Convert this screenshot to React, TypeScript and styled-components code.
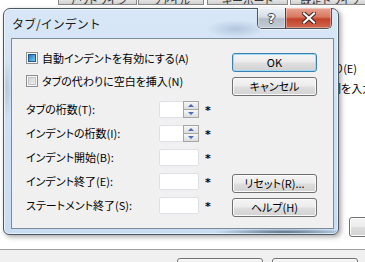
import { Fragment } from "react";
import styled, { createGlobalStyle } from "styled-components";

const GlobalStyle = createGlobalStyle`
  html, body {
    margin: 0;
    padding: 0;
    background: #fff;
  }
  body {
    font-family: "Noto Sans CJK JP", "Noto Sans", sans-serif;
    font-size: 12px;
    color: #000;
  }
`;

const Screen = styled.div`
  position: relative;
  width: 365px;
  height: 262px;
  overflow: hidden;
  display: flex;
  flex-direction: column;
  background: #fff;
  font-feature-settings: "palt" 1;
`;

const TabStrip = styled.div`
  flex: none;
  display: flex;
  height: 5px;
  padding-left: 58px;
  overflow: hidden;
`;

const StripTab = styled.div<{ $w: number; $gap: number }>`
  flex: none;
  box-sizing: border-box;
  width: ${({ $w }) => $w}px;
  height: 5px;
  margin-right: ${({ $gap }) => $gap}px;
  border: 1px solid #8a8a8a;
  border-top: none;
  background: linear-gradient(#e4e4e4, #d0d0d0);
  display: flex;
  align-items: flex-end;
  justify-content: center;
  overflow: hidden;
  line-height: 8px;
  font-size: 11px;
  color: #333;
`;

const Backdrop = styled.div`
  flex: 1;
  display: flex;
  padding-left: 334px;
`;

const SidePane = styled.div`
  display: flex;
  flex-direction: column;
  gap: 6px;
  padding: 56px 0 12px;
  white-space: nowrap;
  font-size: 11px;
`;

const SideLine = styled.div<{ $indent?: number }>`
  line-height: 14px;
  margin-left: ${({ $indent = 0 }) => $indent}px;
`;

const WinButton = styled.button<{ $default?: boolean; $w?: number; $h?: number }>`
  flex: none;
  box-sizing: border-box;
  width: ${({ $w = 85 }) => $w}px;
  height: ${({ $h = 19 }) => $h}px;
  padding: 0;
  font: inherit;
  font-size: 11px;
  line-height: 1;
  color: #000;
  border: 1px solid ${({ $default }) => ($default ? "#3c7fb1" : "#707070")};
  border-radius: 3px;
  background: linear-gradient(#f4f4f4 0%, #ececec 48%, #dedede 52%, #d2d2d2 100%);
  box-shadow: inset 0 0 0 1px ${({ $default }) => ($default ? "#9fdcf6" : "#fbfbfb")};
  white-space: nowrap;
  overflow: hidden;
`;

const SideButton = styled(WinButton)`
  margin-top: auto;
  margin-left: 15px;
  text-align: left;
  padding-left: 14px;
`;

const BottomBar = styled.div`
  flex: none;
  box-sizing: border-box;
  height: 13px;
  border-top: 1px solid #a0a0a0;
  background: #f0f0f0;
  display: flex;
  align-items: flex-start;
  justify-content: flex-end;
  gap: 9px;
  padding: 8px 7px 0 0;
`;

const Dialog = styled.div`
  position: absolute;
  left: 3px;
  top: 8px;
  width: 336px;
  height: 227px;
  box-sizing: border-box;
  display: flex;
  flex-direction: column;
  padding: 0 4px 7px 7px;
  border: 1px solid #4b5866;
  border-radius: 7px 7px 6px 6px;
  background:
    radial-gradient(ellipse 30px 9px at 232px 20px, rgba(110, 140, 175, 0.35), transparent),
    radial-gradient(ellipse 70px 3px at 280px 223px, rgba(55, 75, 95, 0.75), transparent),
    radial-gradient(ellipse 5px 30px at 3px 80px, rgba(120, 140, 165, 0.3), transparent),
    linear-gradient(180deg, #d8e7f7 0%, #cfe1f4 45%, #c9ddf2 100%);
  box-shadow:
    inset 0 0 0 1px rgba(255, 255, 255, 0.55),
    2px 2px 5px rgba(0, 0, 0, 0.35);
`;

const TitleBar = styled.div`
  flex: none;
  height: 29px;
  display: flex;
  align-items: center;
  padding-left: 1px;
  font-size: 12px;
  font-feature-settings: normal;
  color: #1b1b1b;
`;

const CaptionGroup = styled.div`
  position: absolute;
  top: -1px;
  right: 6px;
  display: flex;
  border: 1px solid #4a5462;
  border-top: none;
  border-radius: 0 0 5px 5px;
  overflow: hidden;
  box-shadow: 0 1px 0 rgba(255, 255, 255, 0.6);
`;

const CaptionButton = styled.div<{ $close?: boolean }>`
  box-sizing: border-box;
  width: ${({ $close }) => ($close ? 46 : 27)}px;
  height: 20px;
  display: flex;
  align-items: center;
  justify-content: center;
  border-left: ${({ $close }) => ($close ? "1px solid #5a3a36" : "none")};
  background: ${({ $close }) =>
    $close
      ? "linear-gradient(#e8a595 0%, #d9775f 45%, #c2412a 55%, #cf6a4e 100%)"
      : "linear-gradient(#eef2f6 0%, #d5dce4 45%, #b3bdc8 55%, #c4ccd6 100%)"};
  box-shadow: inset 0 0 0 1px rgba(255, 255, 255, 0.35);
`;

const HelpGlyph = styled.span`
  font-family: "DejaVu Sans", sans-serif;
  font-weight: bold;
  font-size: 13px;
  line-height: 1;
  color: #fff;
  text-shadow:
    -1px 0 #3b4450, 1px 0 #3b4450, 0 -1px #3b4450, 0 1px #3b4450;
`;

const Client = styled.div`
  flex: 1;
  display: flex;
  box-sizing: border-box;
  border: 1px solid #7d8a98;
  background: #f0f0f0;
  padding: 0 16px 11px 14px;
  font-size: 11px;
`;

const Options = styled.div`
  flex: 1;
  display: flex;
  flex-direction: column;
  padding-top: 7px;
  white-space: nowrap;
`;

const CheckRow = styled.label`
  display: flex;
  align-items: center;
  gap: 4px;
  height: 23px;
`;

const Box = styled.span<{ $mixed?: boolean }>`
  flex: none;
  box-sizing: border-box;
  width: 12px;
  height: 12px;
  padding: 1px;
  display: flex;
  border: 1px solid #8e8f8f;
  background: #f6f6f6;

  &::after {
    content: "";
    flex: 1;
    box-sizing: border-box;
    border: 1px solid ${({ $mixed }) => ($mixed ? "#1f5a8e" : "#c4c4c4")};
    background: ${({ $mixed }) =>
      $mixed
        ? "linear-gradient(135deg, #2a70b5 0%, #56a8dd 60%, #7cc4ec 100%)"
        : "linear-gradient(135deg, #d6d6d6 0%, #ececec 100%)"};
  }
`;

const FieldGrid = styled.div`
  display: grid;
  grid-template-columns: 127px 40px auto;
  grid-auto-rows: 24px;
  column-gap: 6px;
  align-items: center;
  margin-top: 5px;
`;

const Field = styled.div`
  box-sizing: border-box;
  width: 40px;
  height: 17px;
  display: flex;
  justify-content: flex-end;
  background: #fff;
  border: 1px solid #dde0e6;
  border-radius: 2px;
`;

const Spinner = styled.div`
  box-sizing: border-box;
  width: 16px;
  display: flex;
  flex-direction: column;
  gap: 1px;
  margin: -1px -1px -1px 0;
  border: 1px solid #a6a6a6;
  background: #a6a6a6;
`;

const SpinHalf = styled.div<{ $down?: boolean }>`
  flex: 1;
  display: flex;
  align-items: center;
  justify-content: center;
  background: linear-gradient(#f7f7f7, #dedede);

  &::after {
    content: "";
    width: 0;
    height: 0;
    border-left: 3px solid transparent;
    border-right: 3px solid transparent;
    ${({ $down }) =>
      $down ? "border-top: 3px solid #4a6cb0;" : "border-bottom: 3px solid #4a6cb0;"}
  }
`;

const Mark = styled.span`
  font-family: "DejaVu Sans", sans-serif;
  font-size: 11px;
  font-weight: bold;
  line-height: 1;
  padding-top: 3px;
`;

const Actions = styled.div`
  flex: none;
  display: flex;
  flex-direction: column;
  gap: 5px;
  padding-top: 14px;
`;

const Spacer = styled.div`
  flex: 1;
`;

const fields = [
  { label: "タブの桁数(T):", spin: true },
  { label: "インデントの桁数(I):", spin: true },
  { label: "インデント開始(B):", spin: false },
  { label: "インデント終了(E):", spin: false },
  { label: "ステートメント終了(S):", spin: false },
];

const tabs = [
  { w: 79, gap: 1, text: "アウトライン" },
  { w: 66, gap: 3, text: "ファイル" },
  { w: 81, gap: 2, text: "キーボード" },
  { w: 80, gap: 0, text: "既定ドライブ" },
];

export default function App() {
  return (
    <>
      <GlobalStyle />
      <Screen>
        <TabStrip>
          {tabs.map((t) => (
            <StripTab key={t.text} $w={t.w} $gap={t.gap}>
              {t.text}
            </StripTab>
          ))}
        </TabStrip>

        <Backdrop>
          <SidePane>
            <SideLine>り(E)</SideLine>
            <SideLine $indent={-4}>列を入力</SideLine>
            <SideButton $w={70} $h={20}>
              リセット
            </SideButton>
          </SidePane>
        </Backdrop>

        <BottomBar>
          <WinButton $w={86} $h={22}>
            OK
          </WinButton>
          <WinButton $w={86} $h={22}>
            キャンセル
          </WinButton>
        </BottomBar>

        <Dialog>
          <TitleBar>タブ/インデント</TitleBar>
          <CaptionGroup>
            <CaptionButton>
              <HelpGlyph>?</HelpGlyph>
            </CaptionButton>
            <CaptionButton $close>
              <svg width="14" height="12" viewBox="0 0 14 12">
                <path
                  d="M2 1.5 L12 10.5 M12 1.5 L2 10.5"
                  stroke="#43201a"
                  strokeWidth="4.2"
                  strokeLinecap="square"
                />
                <path
                  d="M2 1.5 L12 10.5 M12 1.5 L2 10.5"
                  stroke="#fff"
                  strokeWidth="2.2"
                  strokeLinecap="square"
                />
              </svg>
            </CaptionButton>
          </CaptionGroup>

          <Client>
            <Options>
              <CheckRow>
                <Box $mixed />
                自動インデントを有効にする(A)
              </CheckRow>
              <CheckRow>
                <Box />
                タブの代わりに空白を挿入(N)
              </CheckRow>
              <FieldGrid>
                {fields.map((f) => (
                  <Fragment key={f.label}>
                    <span>{f.label}</span>
                    <Field>
                      {f.spin && (
                        <Spinner>
                          <SpinHalf />
                          <SpinHalf $down />
                        </Spinner>
                      )}
                    </Field>
                    <Mark>*</Mark>
                  </Fragment>
                ))}
              </FieldGrid>
            </Options>

            <Actions>
              <WinButton $default>OK</WinButton>
              <WinButton>キャンセル</WinButton>
              <Spacer />
              <WinButton>リセット(R)...</WinButton>
              <WinButton>ヘルプ(H)</WinButton>
            </Actions>
          </Client>
        </Dialog>
      </Screen>
    </>
  );
}
